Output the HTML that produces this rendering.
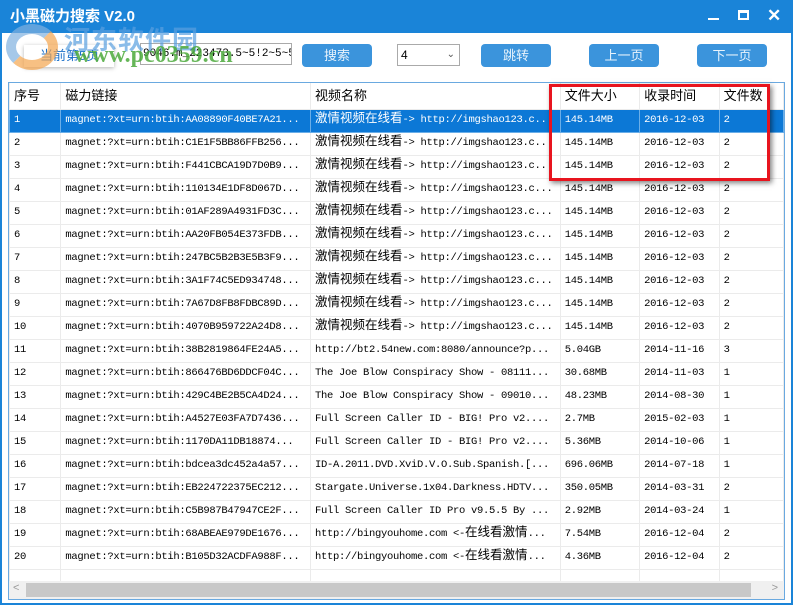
<!DOCTYPE html>
<html><head><meta charset="utf-8"><style>
*{margin:0;padding:0;box-sizing:border-box}
body{width:793px;height:605px;overflow:hidden;background:#fff;font-family:"Liberation Sans","Noto Sans CJK SC",sans-serif;position:relative}
.win{position:absolute;left:0;top:0;width:793px;height:605px;border:2px solid #1a84d8;border-top:none;background:#fff}
.title{position:absolute;left:0;top:0;width:793px;height:33px;background:#1a84d8;color:#fff;font-size:15px;font-weight:bold;line-height:33px;padding-left:10px}
.btn{position:absolute;top:44px;width:70px;height:23px;background:#3b94dc;color:#e8f3fc;border-radius:4px;font-size:13px;text-align:center;line-height:23px}
.inp{position:absolute;left:140px;top:43px;width:152px;height:22px;border:1px solid #aaa;font-family:"Liberation Mono",monospace;font-size:11px;line-height:20px;padding-left:2px;overflow:hidden;white-space:nowrap}
.sel{position:absolute;left:397px;top:44px;width:63px;height:22px;border:1px solid #aaa;font-size:12px;line-height:20px;padding-left:3px}
.tbl{position:absolute;left:8px;top:82px;width:777px;height:518px;border:1px solid #6aa9e0;overflow:hidden}
table{border-collapse:collapse;table-layout:fixed;position:absolute;left:0;top:0}
td{height:23px;line-height:21px;vertical-align:middle;border:1px solid #ebebeb;font-family:"Liberation Mono","Noto Sans CJK SC",monospace;font-size:10.5px;letter-spacing:-0.3px;padding-left:4px;white-space:nowrap;overflow:hidden;color:#000}
td s{text-decoration:none;font-family:"Noto Sans CJK SC",sans-serif;font-size:12.5px;line-height:1;letter-spacing:0}
tr.h td{height:26px;font-family:"Liberation Sans","Noto Sans CJK SC",sans-serif;font-size:13px;letter-spacing:0;border-top:none}
tr.s td{background:#0c78d6;color:#fff;border-color:#6aaee8}
.sb{position:absolute;left:0;bottom:0;width:775px;height:18px;background:#f0f0f0}
.sb i{position:absolute;left:17px;top:2px;width:725px;height:14px;background:#c8c8c8}
.sb b{position:absolute;top:1px;font-size:11px;color:#999;font-weight:normal}
.red{position:absolute;left:549px;top:84px;width:221px;height:97px;border:3px solid #e8141e;box-shadow:2px 2px 5px rgba(0,0,0,.5)}
</style></head><body>
<div class="win"></div>
<div class="title">小黑磁力搜索 V2.0</div>
<div style="position:absolute;left:708px;top:18px;width:11px;height:2px;background:#fff"></div>
<div style="position:absolute;left:738px;top:10px;width:11px;height:10px;border:2px solid #fff;border-top-width:3px"></div>
<div style="position:absolute;left:767px;top:6px;color:#fff;font-size:17px;font-weight:bold">✕</div>
<div style="position:absolute;left:24px;top:45px;width:90px;height:22px;background:#fff;box-shadow:0 1px 4px rgba(0,0,0,.3);font-size:13px;color:#1a6fc8;padding-left:16px;line-height:22px">当前第5页</div>
<div class="inp">9046.m_223473.5~5!2~5~5~A</div>
<div class="btn" style="left:302px">搜索</div>
<div class="sel">4<span style="position:absolute;right:4px;top:0;font-size:10px;color:#555">⌄</span></div>
<div class="btn" style="left:481px">跳转</div>
<div class="btn" style="left:589px">上一页</div>
<div class="btn" style="left:697px">下一页</div>
<div style="position:absolute;left:6px;top:24px;width:52px;height:46px;border-radius:50%;border:10px solid #7fb1e0;border-right-color:#f5a650;border-bottom-color:#f5a650;opacity:.7"></div>
<div style="position:absolute;left:64px;top:20px;font-size:26px;font-weight:bold;color:#5aa0e0;opacity:.7;letter-spacing:1px">河东软件园</div>
<div style="position:absolute;left:74px;top:42px;font-size:24px;font-weight:bold;color:#4caa3c;opacity:.85;font-family:'Liberation Serif',serif">www.pc0359.cn</div>
<div class="tbl">
<table>
<colgroup><col style="width:52px"><col style="width:250px"><col style="width:250px"><col style="width:80px"><col style="width:80px"><col style="width:65px"></colgroup>
<tr class="h"><td>序号</td><td>磁力链接</td><td>视频名称</td><td>文件大小</td><td>收录时间</td><td>文件数</td></tr>
<tr class="s"><td>1</td><td>magnet:?xt=urn:btih:AA08890F40BE7A21...</td><td><s>激情视频在线看</s>-> http://imgshao123.c...</td><td>145.14MB</td><td>2016-12-03</td><td>2</td></tr>
<tr><td>2</td><td>magnet:?xt=urn:btih:C1E1F5BB86FFB256...</td><td><s>激情视频在线看</s>-> http://imgshao123.c...</td><td>145.14MB</td><td>2016-12-03</td><td>2</td></tr>
<tr><td>3</td><td>magnet:?xt=urn:btih:F441CBCA19D7D0B9...</td><td><s>激情视频在线看</s>-> http://imgshao123.c...</td><td>145.14MB</td><td>2016-12-03</td><td>2</td></tr>
<tr><td>4</td><td>magnet:?xt=urn:btih:110134E1DF8D067D...</td><td><s>激情视频在线看</s>-> http://imgshao123.c...</td><td>145.14MB</td><td>2016-12-03</td><td>2</td></tr>
<tr><td>5</td><td>magnet:?xt=urn:btih:01AF289A4931FD3C...</td><td><s>激情视频在线看</s>-> http://imgshao123.c...</td><td>145.14MB</td><td>2016-12-03</td><td>2</td></tr>
<tr><td>6</td><td>magnet:?xt=urn:btih:AA20FB054E373FDB...</td><td><s>激情视频在线看</s>-> http://imgshao123.c...</td><td>145.14MB</td><td>2016-12-03</td><td>2</td></tr>
<tr><td>7</td><td>magnet:?xt=urn:btih:247BC5B2B3E5B3F9...</td><td><s>激情视频在线看</s>-> http://imgshao123.c...</td><td>145.14MB</td><td>2016-12-03</td><td>2</td></tr>
<tr><td>8</td><td>magnet:?xt=urn:btih:3A1F74C5ED934748...</td><td><s>激情视频在线看</s>-> http://imgshao123.c...</td><td>145.14MB</td><td>2016-12-03</td><td>2</td></tr>
<tr><td>9</td><td>magnet:?xt=urn:btih:7A67D8FB8FDBC89D...</td><td><s>激情视频在线看</s>-> http://imgshao123.c...</td><td>145.14MB</td><td>2016-12-03</td><td>2</td></tr>
<tr><td>10</td><td>magnet:?xt=urn:btih:4070B959722A24D8...</td><td><s>激情视频在线看</s>-> http://imgshao123.c...</td><td>145.14MB</td><td>2016-12-03</td><td>2</td></tr>
<tr><td>11</td><td>magnet:?xt=urn:btih:38B2819864FE24A5...</td><td>http://bt2.54new.com:8080/announce?p...</td><td>5.04GB</td><td>2014-11-16</td><td>3</td></tr>
<tr><td>12</td><td>magnet:?xt=urn:btih:866476BD6DDCF04C...</td><td>The Joe Blow Conspiracy Show - 08111...</td><td>30.68MB</td><td>2014-11-03</td><td>1</td></tr>
<tr><td>13</td><td>magnet:?xt=urn:btih:429C4BE2B5CA4D24...</td><td>The Joe Blow Conspiracy Show - 09010...</td><td>48.23MB</td><td>2014-08-30</td><td>1</td></tr>
<tr><td>14</td><td>magnet:?xt=urn:btih:A4527E03FA7D7436...</td><td>Full Screen Caller ID - BIG! Pro v2....</td><td>2.7MB</td><td>2015-02-03</td><td>1</td></tr>
<tr><td>15</td><td>magnet:?xt=urn:btih:1170DA11DB18874...</td><td>Full Screen Caller ID - BIG! Pro v2....</td><td>5.36MB</td><td>2014-10-06</td><td>1</td></tr>
<tr><td>16</td><td>magnet:?xt=urn:btih:bdcea3dc452a4a57...</td><td>ID-A.2011.DVD.XviD.V.O.Sub.Spanish.[...</td><td>696.06MB</td><td>2014-07-18</td><td>1</td></tr>
<tr><td>17</td><td>magnet:?xt=urn:btih:EB224722375EC212...</td><td>Stargate.Universe.1x04.Darkness.HDTV...</td><td>350.05MB</td><td>2014-03-31</td><td>2</td></tr>
<tr><td>18</td><td>magnet:?xt=urn:btih:C5B987B47947CE2F...</td><td>Full Screen Caller ID Pro v9.5.5 By ...</td><td>2.92MB</td><td>2014-03-24</td><td>1</td></tr>
<tr><td>19</td><td>magnet:?xt=urn:btih:68ABEAE979DE1676...</td><td>http://bingyouhome.com &lt;-<s>在线看激情</s>...</td><td>7.54MB</td><td>2016-12-04</td><td>2</td></tr>
<tr><td>20</td><td>magnet:?xt=urn:btih:B105D32ACDFA988F...</td><td>http://bingyouhome.com &lt;-<s>在线看激情</s>...</td><td>4.36MB</td><td>2016-12-04</td><td>2</td></tr>
<tr><td></td><td></td><td></td><td></td><td></td><td></td></tr>
</table>
<div class="sb"><b style="left:4px">&lt;</b><i></i><b style="right:6px">&gt;</b></div>
</div>
<div class="red"></div>
</body></html>
